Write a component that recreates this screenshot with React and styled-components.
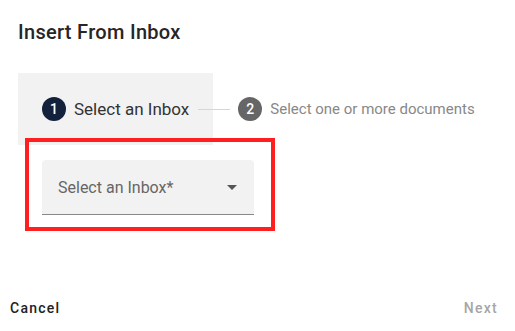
import React from "react";
import styled, { createGlobalStyle } from "styled-components";

const GlobalStyle = createGlobalStyle`
  html, body {
    margin: 0;
    padding: 0;
    background: #fff;
  }
  body {
    font-family: Roboto, "Liberation Sans", Arial, sans-serif;
  }
`;

const Dialog = styled.div`
  height: 331px;
  display: flex;
  flex-direction: column;
  box-sizing: border-box;
`;

const Title = styled.h2`
  margin: 0;
  padding: 20px 18px 0;
  font-size: 20px;
  line-height: 24px;
  font-weight: 500;
  letter-spacing: 0.3px;
  color: #262626;
`;

const Stepper = styled.div`
  display: flex;
  align-items: center;
  margin: 29px 0 0 18px;
`;

const StepButton = styled.div`
  display: flex;
  align-items: center;
  gap: 8px;
  padding: ${(p) => (p.$focused ? "24px" : "24px 24px 24px 8px")};
  background: ${(p) => (p.$focused ? "#f2f2f2" : "transparent")};
`;

const StepIcon = styled.span`
  width: 24px;
  height: 24px;
  border-radius: 50%;
  display: flex;
  align-items: center;
  justify-content: center;
  background: ${(p) => (p.$active ? "#14213d" : "#666")};
  color: #fff;
  font-size: 14px;
  font-weight: 500;
`;

const StepLabel = styled.span`
  font-size: ${(p) => (p.$active ? "17px" : "15px")};
  color: ${(p) => (p.$active ? "#333" : "#888")};
`;

const Connector = styled.span`
  flex: 0 0 32px;
  height: 1px;
  background: #d6d6d6;
  margin: 0 0 0 -15px;
`;

const Content = styled.div`
  flex: 1;
  padding: 15px 0 0 42px;
`;

const Highlight = styled.div`
  position: relative;
  width: 212px;

  &::after {
    content: "";
    position: absolute;
    left: -17px;
    top: -22px;
    right: -21px;
    bottom: -16px;
    border: 4px solid #ff1f1f;
    pointer-events: none;
  }
`;

const Select = styled.div`
  height: 55px;
  display: flex;
  align-items: center;
  justify-content: space-between;
  padding: 0 10px 0 16px;
  background: #f2f2f2;
  border-radius: 4px 4px 0 0;
  border-bottom: 1px solid #888;
  box-sizing: border-box;
  font-size: 16px;
  color: #666;
`;

const Footer = styled.div`
  display: flex;
  justify-content: space-between;
  align-items: center;
  padding: 0 17px 13px 10px;
`;

const TextButton = styled.button`
  border: none;
  background: none;
  padding: 0;
  font-family: inherit;
  font-size: 14px;
  font-weight: 500;
  letter-spacing: 1.25px;
  line-height: 20px;
  color: ${(p) => (p.disabled ? "#a6a6a6" : "#222")};
  cursor: ${(p) => (p.disabled ? "default" : "pointer")};
`;

const ArrowDropDown = () => (
  <svg width="24" height="24" viewBox="0 0 24 24" fill="#555">
    <path d="M7 10l5 5 5-5z" />
  </svg>
);

export default function App() {
  return (
    <Dialog>
      <GlobalStyle />
      <Title>Insert From Inbox</Title>
      <Stepper>
        <StepButton $focused>
          <StepIcon $active>1</StepIcon>
          <StepLabel $active>Select an Inbox</StepLabel>
        </StepButton>
        <Connector />
        <StepButton>
          <StepIcon>2</StepIcon>
          <StepLabel>Select one or more documents</StepLabel>
        </StepButton>
      </Stepper>
      <Content>
        <Highlight>
          <Select>
            Select an Inbox*
            <ArrowDropDown />
          </Select>
        </Highlight>
      </Content>
      <Footer>
        <TextButton>Cancel</TextButton>
        <TextButton disabled>Next</TextButton>
      </Footer>
    </Dialog>
  );
}
